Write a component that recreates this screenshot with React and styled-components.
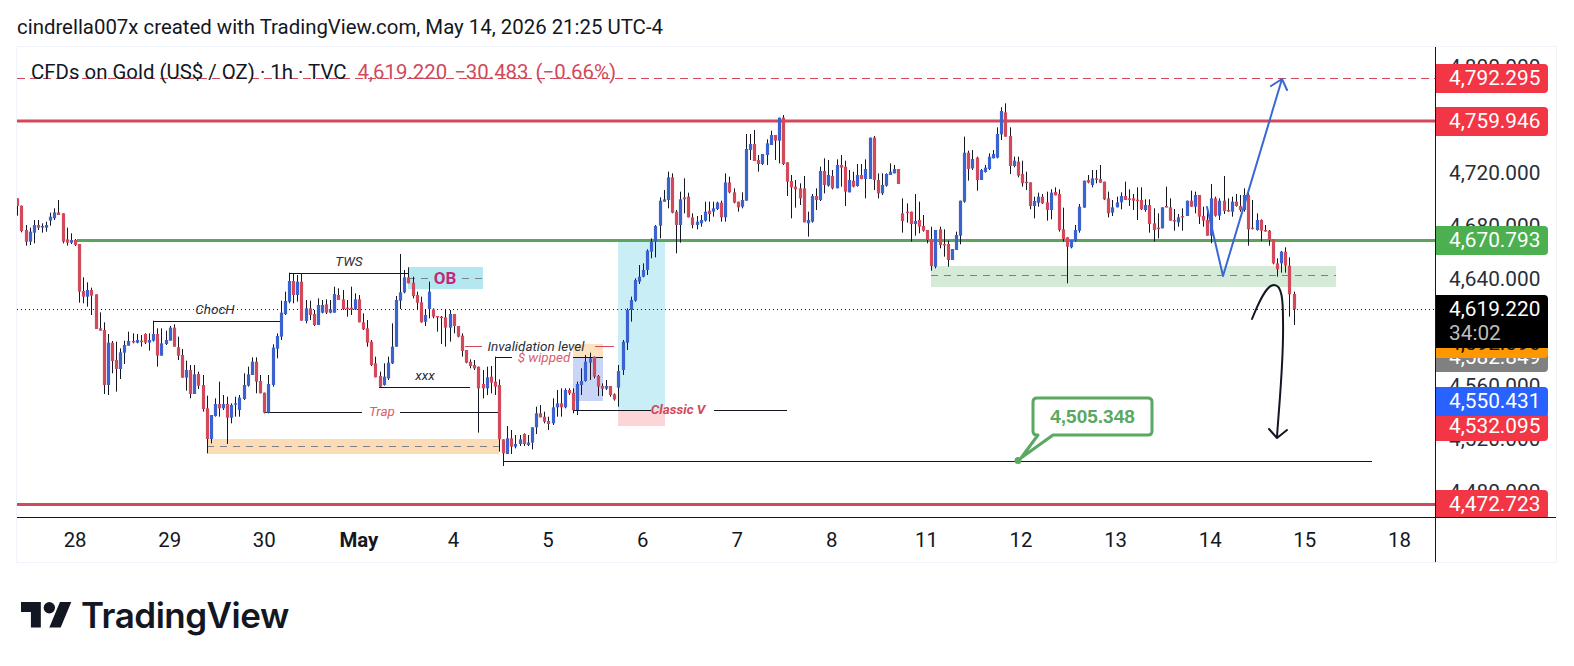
import React from "react";
import styled, { createGlobalStyle } from "styled-components";

const GlobalStyle = createGlobalStyle`
  html, body { margin: 0; padding: 0; background: #fff; }
  body { font-family: Roboto, "Liberation Sans", sans-serif; color: #131722; }
`;

/* Candles transcribed from the picture: x offset, body top, body bottom, wick top, wick bottom, colour. */
const SEGMENTS = [
  { x0: 0, y0: 190, rows: `52 25 48 25 77 r;64 47 123 47 127 r;79 120 155 105 167 r;91 125 155 113 165 b;103 105 128 90 160 b;115 105 113 90 120 r;127 108 112 100 128 b;139 105 113 95 125 b;151 80 92 68 107 b;163 67 85 55 90 b;175 67 75 30 75 r;190 70 155 70 160 r;202 148 158 113 167 r;214 150 158 130 162 b;226 150 165 147 168 r;238 162 305 162 338 r;250 303 320 262 340 r;262 300 320 277 350 b;274 300 317 293 375 r;289 313 417 313 417 r;301 415 422 367 422 r;313 420 585 397 612 r;325 458 585 432 615 b;337 458 513 453 550 r;349 510 537 455 605 r;361 487 537 475 567 b;373 465 488 452 522 b;385 453 467 425 467 b;400 453 457 430 460 r;412 450 458 432 460 b;424 452 455 435 470 r;436 432 458 430 462 r;448 450 458 430 482 b;460 432 452 392 455 b;472 432 497 415 530 r;484 460 497 415 497 b;499 450 462 422 465 b;511 413 452 408 452 b;523 413 470 403 470 r;535 472 497 440 510 r;547 495 563 477 563 r;559 540 563 512 602 b;571 540 612 525 625 r;583 553 612 525 612 b;595 552 587 545 597 r;610 585 657 555 665 r;622 655 747 617 790 r;634 675 747 675 760 b` },
  { x0: 100, y0: 240, rows: `346 492 528 475 530 b;358 492 505 425 530 r;370 492 505 465 510 b;382 492 533 470 612 r;394 495 533 490 550 b;406 490 494 470 530 b;418 473 510 465 530 b;433 435 477 400 480 b;445 403 437 380 440 b;457 365 405 352 405 b;469 365 425 352 460 r;481 423 460 405 460 r;493 458 518 458 520 r;505 432 518 405 520 b;520 323 435 313 440 b;532 288 326 280 355 b;544 218 290 182 300 b;556 183 222 155 225 b;568 123 185 98 190 b;580 123 165 100 190 r;592 125 165 105 185 b;604 125 242 100 242 r;619 205 243 180 250 b;631 205 225 182 240 r;643 222 255 210 258 r;655 195 255 175 255 b;667 195 218 180 220 b;679 193 218 178 222 r;691 208 218 180 220 b;703 162 218 140 218 b;715 165 180 145 180 r;730 178 207 150 210 r;742 203 207 180 230 r;754 203 209 140 225 r;766 178 208 160 210 b;778 178 247 165 247 r;790 247 268 220 270 r;802 265 308 240 320 r;814 305 375 300 378 r;826 370 412 350 412 r;841 408 440 395 442 r;853 410 435 370 437 b;865 368 415 350 420 b;877 320 370 250 372 b;889 180 320 168 320 b;901 157 182 42 207 b;913 112 157 90 160 b;925 112 130 82 130 r;940 128 168 110 175 r;952 165 188 155 210 r;964 187 247 170 248 r;976 225 245 210 258 b;988 155 207 125 235 b;1000 208 230 205 235 r;1012 228 232 228 275 r;1024 230 233 228 312 r;1036 232 263 210 320 r;1051 222 263 210 305 b;1063 222 258 222 280 r;1075 258 290 258 292 r` },
  { x0: 460, y0: 160, rows: `7 527 573 520 590 r;19 570 608 570 610 r;31 605 618 598 625 r;43 615 625 600 630 r;55 620 685 620 818 r;70 672 685 630 715 r;82 652 685 620 705 b;94 650 668 618 700 r;106 665 680 590 705 r;118 675 838 658 875 r;130 838 880 838 918 r;142 835 882 798 882 b;154 835 860 810 882 r;166 852 860 825 865 b;181 838 852 825 858 b;193 822 852 820 858 r;205 848 855 825 858 b;217 802 848 802 868 b;229 760 802 740 822 b;241 760 772 735 772 r;253 770 785 755 790 r;265 783 792 770 810 r;280 742 790 715 795 b;292 730 742 690 770 b;304 730 742 685 770 r;316 690 742 685 745 b;328 690 700 685 705 r;340 698 750 685 760 r;352 672 750 665 765 b;364 663 675 625 705 b;376 605 663 585 665 b;391 595 608 578 660 b;403 590 650 590 655 r;415 648 680 645 708 r;427 678 686 670 708 r;439 678 686 660 690 b;451 678 705 678 710 r;463 703 718 700 722 r;475 633 683 615 740 b;490 545 630 540 645 b;502 450 548 445 570 b;514 420 450 410 485 b;526 360 422 355 425 b;538 350 365 315 372 b;550 330 350 310 352 b;562 272 330 268 345 b;574 245 275 235 295 b;586 198 245 195 292 b;601 122 197 112 235 b;613 118 125 90 125 b;625 52 120 35 145 b;637 52 158 40 160 r;649 155 195 150 280 r;661 118 195 95 248 b;673 112 118 55 160 r;685 110 172 98 172 r;697 172 195 160 205 r;712 185 195 168 208 b;724 180 190 165 200 b;736 155 182 125 185 b;748 152 162 125 185 r;760 145 155 125 170 b;772 128 147 125 150 b;784 128 172 122 185 r;796 67 172 40 185 b;808 67 97 50 100 r;823 97 128 85 130 r;835 125 142 125 155 r;847 120 140 97 145 b` },
  { x0: 735, y0: 100, rows: `34 147 302 102 302 b;46 132 150 102 180 b;58 132 183 90 183 r;70 180 192 165 215 r;82 162 192 162 195 b;97 130 165 118 195 b;109 105 135 92 135 b;121 105 122 105 180 r;133 53 122 53 190 b;145 53 192 45 195 r;157 187 245 187 288 r;169 243 262 225 355 r;181 260 268 240 323 r;196 265 295 250 315 r` },
  { x0: 800, y0: 90, rows: `13 295 397 258 397 r;25 390 400 365 440 b;37 318 395 312 398 b;49 318 330 295 360 r;61 243 330 230 333 b;73 243 285 205 310 r;85 255 287 210 290 b;97 258 295 240 298 r;112 225 295 208 295 b;124 225 233 195 290 r;136 230 305 212 348 r;148 270 307 240 307 b;160 272 290 245 292 r;172 255 288 222 290 b;184 255 267 222 268 r;196 237 267 208 325 b;211 143 267 143 267 b;223 143 270 138 300 r;235 270 310 250 325 r;247 285 310 250 315 b;259 252 287 250 290 b;271 245 255 220 255 b;283 237 250 225 250 b;295 237 282 237 282 r;307 370 393 325 428 r;322 365 368 340 398 r;334 365 402 365 455 r;346 393 402 312 437 b;358 390 410 335 430 r;370 408 422 375 425 r;382 420 450 420 460 r;394 447 528 410 542 r;406 420 530 420 535 b;421 418 465 410 475 r;433 462 465 418 500 r;445 462 510 452 530 r;457 477 510 477 510 b;469 435 480 425 480 b;481 332 437 332 463 b;493 188 335 140 338 b;505 188 237 182 272 r;517 207 235 180 240 b;532 203 270 200 302 r;544 240 270 237 270 b;556 233 246 225 248 b;568 200 237 190 240 b;580 192 205 180 205 b;592 132 203 112 205 b;604 63 133 52 150 b;616 67 140 40 140 r;631 138 228 112 252 r;643 212 228 200 232 b;655 215 257 200 262 r;667 252 280 212 290 r;679 275 279 245 300 r;691 277 348 277 358 r;703 333 348 320 385 b;715 320 338 308 350 b;727 320 340 312 342 r;742 337 360 305 392 r;754 308 360 298 388 b;766 306 316 292 316 r;778 312 420 298 425 r;790 418 447 353 455 r;802 442 470 442 580 r;814 450 472 450 475 b;826 420 452 405 455 b;838 350 422 342 428 b;853 272 353 272 353 b;865 270 278 255 280 r;877 265 285 240 292 b;889 265 268 240 280 r;901 267 278 225 278 r;913 275 328 275 330 r;925 325 370 305 382 r;937 352 368 330 378 b;952 337 352 320 352 b` },
  { x0: 1100, y0: 70, rows: `64 378 397 367 418 b;76 378 390 335 390 r;88 385 388 358 408 r;100 385 392 372 420 r;112 389 392 352 450 r;124 390 418 352 420 r;136 405 420 388 425 b;148 405 462 388 488 r;163 460 480 415 515 r;175 473 477 430 505 r;187 412 475 412 475 b;199 408 412 350 412 r;211 412 452 385 452 r;223 450 454 417 482 r;235 442 457 432 470 b;247 438 442 415 482 r;262 392 438 392 438 b;274 392 410 362 410 r;286 375 410 365 430 b;298 375 440 375 462 r;310 438 452 410 470 r;322 450 497 412 497 r;334 385 497 342 520 b;346 385 437 380 440 r;358 392 437 385 450 b;373 392 423 318 432 r;385 420 424 385 425 r;397 395 425 380 440 b;409 395 408 372 410 r;421 408 420 375 425 r;433 375 420 355 425 b;445 375 478 368 527 r;457 473 477 390 478 r;472 450 480 430 482 b;484 450 482 448 513 r;496 480 484 465 485 r;508 482 510 480 527 r;520 508 580 508 583 r;532 580 598 565 620 r;544 545 580 543 608 b;556 545 587 532 608 r;568 587 673 562 740 r;583 672 718 665 765 r` },
];

const CANDLES = SEGMENTS.flatMap(({ x0, y0, rows }) =>
  rows.split(";").map((row) => {
    const [zx, b1, b2, w1, w2, c] = row.split(" ");
    const x = x0 + zx / 3;
    return {
      x,
      wickX: Math.round(x - 0.5) + 0.5,
      top: y0 + b1 / 3,
      bottom: y0 + b2 / 3,
      high: y0 + w1 / 3,
      low: y0 + w2 / 3,
      up: c === "b",
    };
  })
);

const TICKS = [
  ["4,800.000", 67], ["4,720.000", 173], ["4,680.000", 226], ["4,640.000", 279],
  ["4,560.000", 386.5], ["4,520.000", 439.5], ["4,480.000", 492.5],
];

const TAGS = [
  { text: "4,792.295", y: 78.5, bg: "#f23645" },
  { text: "4,759.946", y: 121.5, bg: "#f23645" },
  { text: "4,670.793", y: 240.5, bg: "#4caf50" },
  { text: "4,582.849", y: 357.5, bg: "#808080" },
  { text: "4,592.096", y: 343.5, bg: "#ff9800", fg: "#131722" },
  { text: "4,532.095", y: 426, bg: "#f23645" },
  { text: "4,550.431", y: 401.5, bg: "#2962ff" },
  { text: "4,472.723", y: 504, bg: "#f23645" },
];

const DAYS = [
  ["28"], ["29"], ["30"], ["May", true], ["4"], ["5"], ["6"], ["7"], ["8"], ["11"], ["12"], ["13"], ["14"], ["15"], ["18"],
];

const Page = styled.div`
  width: 1574px;
  height: 666px;
  background: #fff;
  overflow: hidden;
  padding: 0 0 0 16px;
  box-sizing: border-box;
`;

const Caption = styled.div`
  height: 46px;
  padding: 14.5px 0 0 1px;
  box-sizing: border-box;
  font-size: 20.4px;
  line-height: 24px;
  color: #131722;
  white-space: nowrap;
`;

const ChartFrame = styled.div`
  width: 1541px;
  box-sizing: border-box;
  border: 1px solid #f0f3fa;
  display: grid;
  grid-template-columns: 1418px 1fr;
  grid-template-rows: 470px 45px;
`;

const Plot = styled.div`
  position: relative;
  overflow: hidden;
`;

const Legend = styled.div`
  position: absolute;
  left: 14px;
  top: 13px;
  display: flex;
  gap: 11px;
  font-size: 20.4px;
  line-height: 25px;
  color: #131722;
  white-space: nowrap;
`;

const LegendValues = styled.span`
  color: #d1495b;
  word-spacing: 2px;
`;

const ChartSvg = styled.svg`
  display: block;
`;

const Body = styled.rect`
  fill: ${(p) => (p.$up ? "#3a63d0" : "#d1495b")};
`;

const Wick = styled.line`
  stroke: #131722;
  stroke-width: 1;
`;

const Zone = styled.rect`
  fill: ${(p) => p.$fill};
`;

const Level = styled.line`
  stroke: ${(p) => p.$color};
  stroke-width: ${(p) => p.$w || 1};
  stroke-dasharray: ${(p) => p.$dash || "none"};
`;

const Drawn = styled.path`
  fill: none;
  stroke: ${(p) => p.$color};
  stroke-width: ${(p) => p.$w || 2};
  stroke-linecap: round;
  stroke-linejoin: round;
`;

const Note = styled.text`
  font-family: Roboto, sans-serif;
  font-size: ${(p) => p.$size || 13.5}px;
  font-style: ${(p) => (p.$plain ? "normal" : "italic")};
  font-weight: ${(p) => p.$weight || 400};
  fill: ${(p) => p.$color || "#2a2e39"};
  text-anchor: middle;
  dominant-baseline: central;
`;

const CalloutBox = styled.path`
  fill: #fff;
  stroke: #5aa861;
  stroke-width: 3;
  stroke-linejoin: round;
`;

const CalloutDot = styled.circle`
  fill: #5aa861;
`;

const CalloutText = styled.text`
  font-family: "Liberation Sans", Arial, sans-serif;
  font-size: 19px;
  font-weight: 700;
  fill: #5aa861;
  text-anchor: middle;
  dominant-baseline: central;
`;

const PriceAxis = styled.div`
  position: relative;
  overflow: hidden;
  border-left: 1px solid #131722;
`;

const AXIS_TOP = 47;

const Tick = styled.span`
  position: absolute;
  left: 13px;
  top: ${(p) => p.$y - AXIS_TOP - 14.5}px;
  font-size: 20.8px;
  line-height: 29px;
  color: #2a2e39;
`;

const Tag = styled.div`
  position: absolute;
  left: 0;
  top: ${(p) => p.$y - AXIS_TOP - 14.5}px;
  width: 112px;
  height: 29px;
  padding-left: 13px;
  box-sizing: border-box;
  border-radius: 0 4px 4px 0;
  background: ${(p) => p.$bg};
  color: ${(p) => p.$fg || "#fff"};
  font-size: 20.8px;
  line-height: 29px;
`;

const ClockTag = styled.div`
  position: absolute;
  left: 0;
  top: ${295 - AXIS_TOP}px;
  width: 112px;
  height: 53px;
  padding: 2px 0 0 13px;
  box-sizing: border-box;
  border-radius: 0 4px 0 0;
  background: #000;
  color: #fff;
  font-size: 20.8px;
  line-height: 24px;
`;

const Clock = styled.div`
  color: #bdbdbd;
`;

const TimeAxis = styled.div`
  border-top: 1px solid #131722;
  display: grid;
  grid-template-columns: repeat(15, 94.6px);
  padding-left: 10.8px;
  align-items: center;
  overflow: hidden;
`;

const Day = styled.span`
  text-align: center;
  font-size: 20.4px;
  font-weight: ${(p) => (p.$bold ? 700 : 400)};
  color: #131722;
`;

const AxisCorner = styled.div`
  border-top: 1px solid #131722;
  border-left: 1px solid #131722;
`;

const Brand = styled.div`
  display: flex;
  align-items: center;
  gap: 9px;
  margin: 33px 0 0 5px;
`;

const BrandName = styled.span`
  font-family: Inter, Roboto, sans-serif;
  font-size: 35px;
  font-weight: 600;
  line-height: 38px;
  letter-spacing: -0.5px;
  color: #131722;
`;

const BrandMark = styled.svg`
  display: block;
  fill: #131722;
`;

const DASH = "7 6";
const DASH_COLOR = "#7d8089";
const INK = "#131722";

function Chart() {
  return (
    <ChartSvg width="1418" height="470" viewBox="17 47 1418 470">
      <Zone x="207" y="439" width="292" height="15" $fill="#fcdcb4" />
      <Zone x="408" y="267" width="75" height="22" $fill="#b3e8f0" />
      <Zone x="618" y="240" width="47" height="170" $fill="#c9eef5" />
      <Zone x="618" y="410" width="47" height="16" $fill="#fbd5d8" />
      <Zone x="573" y="344" width="30" height="13" $fill="#fde2bf" />
      <Zone x="573" y="357" width="30" height="44" $fill="#c9d5f7" />
      <Zone x="931" y="266" width="405" height="21" $fill="#d5ebd7" />

      <Level x1="207" x2="499" y1="446.5" y2="446.5" $color={DASH_COLOR} $dash={DASH} />
      <Level x1="408" x2="428" y1="278.5" y2="278.5" $color={DASH_COLOR} $dash={DASH} />
      <Level x1="462" x2="483" y1="278.5" y2="278.5" $color={DASH_COLOR} $dash={DASH} />
      <Level x1="931" x2="1336" y1="275.5" y2="275.5" $color={DASH_COLOR} $dash={DASH} />

      <Level x1="17" x2="1435" y1="78.5" y2="78.5" $color="#d1495b" $dash="8 5" />
      <Level x1="17" x2="1435" y1="121" y2="121" $color="#d1495b" $w="3" />
      <Level x1="77" x2="1435" y1="240.5" y2="240.5" $color="#5ba35f" $w="3" />
      <Level x1="17" x2="1435" y1="504.5" y2="504.5" $color="#d1495b" $w="3" />
      <Level x1="17" x2="1435" y1="309.5" y2="309.5" $color={INK} $dash="1 3" />

      <Level x1="153.5" x2="280" y1="321.5" y2="321.5" $color={INK} />
      <Level x1="153.5" x2="153.5" y1="321.5" y2="336" $color={INK} />
      <Level x1="289.5" x2="408" y1="273.5" y2="273.5" $color={INK} />
      <Level x1="289.5" x2="289.5" y1="273.5" y2="285" $color={INK} />
      <Level x1="379" x2="470" y1="387.5" y2="387.5" $color={INK} />
      <Level x1="265" x2="362" y1="412.5" y2="412.5" $color={INK} />
      <Level x1="400" x2="499" y1="412.5" y2="412.5" $color={INK} />
      <Level x1="573" x2="651" y1="410.5" y2="410.5" $color={INK} />
      <Level x1="714" x2="787" y1="410.5" y2="410.5" $color={INK} />
      <Level x1="503" x2="1372" y1="461.5" y2="461.5" $color={INK} />
      <Level x1="495.5" x2="512" y1="357.5" y2="357.5" $color={INK} />
      <Level x1="495.5" x2="495.5" y1="357.5" y2="386" $color={INK} />
      <Level x1="573" x2="603" y1="357.5" y2="357.5" $color={INK} />
      <Level x1="465" x2="482" y1="346.5" y2="346.5" $color="#d1495b" />
      <Level x1="595" x2="614" y1="346.5" y2="346.5" $color="#d1495b" />

      {CANDLES.map((c) => (
        <g key={c.x}>
          <Wick x1={c.wickX} x2={c.wickX} y1={c.high} y2={c.low} />
          <Body x={c.wickX - 1.6} y={c.top} width="3.2" height={Math.max(c.bottom - c.top, 1.5)} $up={c.up} />
        </g>
      ))}

      <Note x="445" y="278" $size="17" $plain $weight="700" $color="#c2287a">OB</Note>
      <Note x="349" y="261">TWS</Note>
      <Note x="215" y="309">ChocH</Note>
      <Note x="425" y="375">xxx</Note>
      <Note x="382" y="411" $color="#d9606f">Trap</Note>
      <Note x="536" y="346">Invalidation level</Note>
      <Note x="544" y="357" $color="#d9606f">$ wipped</Note>
      <Note x="678" y="409" $weight="700" $color="#d1495b">Classic V</Note>

      <Drawn $color="#3a67d6" d="M1207 207 L1223 276 L1282 79 M1271 86 L1282 79 L1287 90" />
      <Drawn $color={INK} d="M1252 319 C1258 304 1266 285 1274 285 C1282 285 1283 300 1283 320 C1284 360 1279 405 1277 437 M1269 429 L1277 438 L1287 430" />

      <CalloutBox d="M1037 398 H1148 Q1152 398 1152 402 V431 Q1152 435 1148 435 H1053 L1021 458 L1038 435 H1037 Q1033 435 1033 431 V402 Q1033 398 1037 398 Z" />
      <CalloutDot cx="1018" cy="460.5" r="3.5" />
      <CalloutText x="1092.5" y="416">4,505.348</CalloutText>
    </ChartSvg>
  );
}

export default function App() {
  return (
    <Page>
      <GlobalStyle />
      <Caption>cindrella007x created with TradingView.com, May 14, 2026 21:25 UTC-4</Caption>
      <ChartFrame>
        <Plot>
          <Chart />
          <Legend>
            <span>CFDs on Gold (US$ / OZ) · 1h · TVC</span>
            <LegendValues>4,619.220 −30.483 (−0.66%)</LegendValues>
          </Legend>
        </Plot>
        <PriceAxis>
          {TICKS.map(([t, y]) => (
            <Tick key={t} $y={y}>{t}</Tick>
          ))}
          {TAGS.map((t) => (
            <Tag key={t.text} $y={t.y} $bg={t.bg} $fg={t.fg}>{t.text}</Tag>
          ))}
          <ClockTag>
            4,619.220
            <Clock>34:02</Clock>
          </ClockTag>
        </PriceAxis>
        <TimeAxis>
          {DAYS.map(([d, bold]) => (
            <Day key={d} $bold={bold}>{d}</Day>
          ))}
        </TimeAxis>
        <AxisCorner />
      </ChartFrame>
      <Brand>
        <BrandMark width="51" height="27" viewBox="0 4 36 19">
          <path d="M14 22H7V11H0V4h14v18zM28 22h-8l7.5-18h8L28 22z" />
          <circle cx="20" cy="8" r="4" />
        </BrandMark>
        <BrandName>TradingView</BrandName>
      </Brand>
    </Page>
  );
}
